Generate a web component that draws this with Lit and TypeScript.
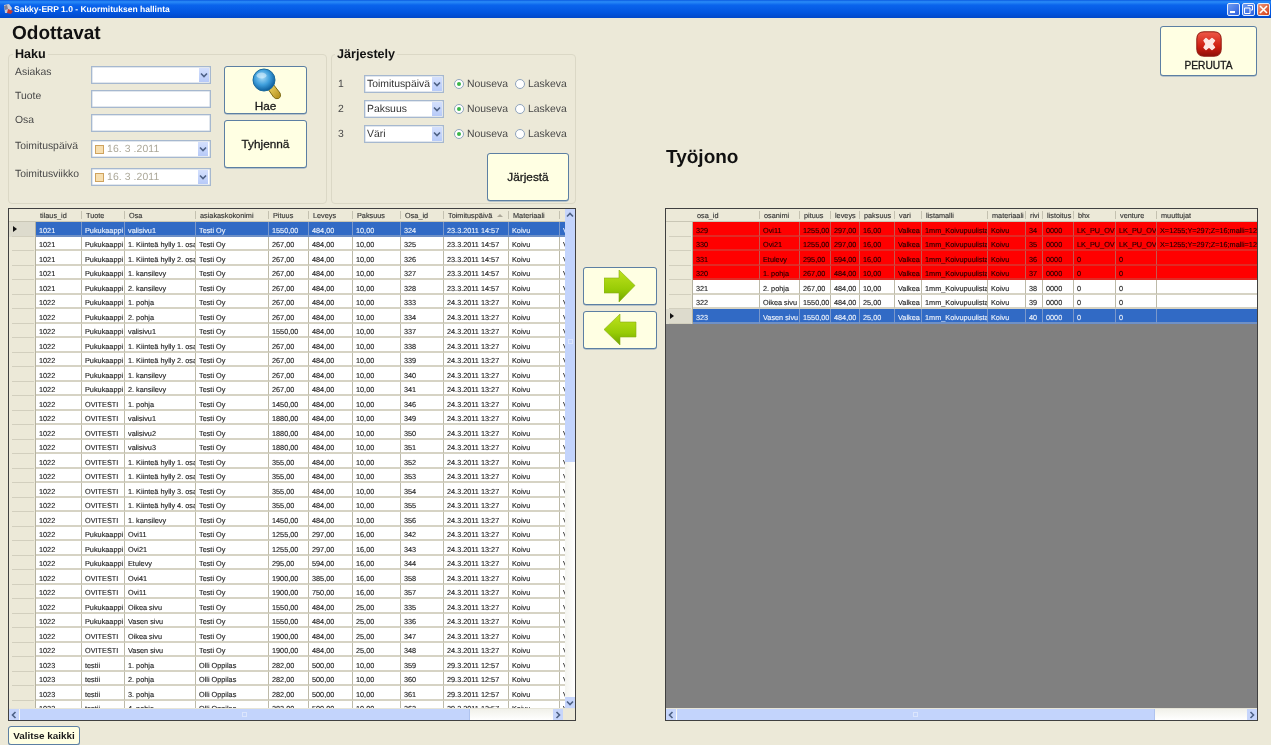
import { LitElement, html, css, svg } from 'lit';
import { customElement, property } from 'lit/decorators.js';

type Col = [string, number];

const LEFT_COLS: Col[] = [
  ['tilaus_id', 46], ['Tuote', 43], ['Osa', 71], ['asiakaskokonimi', 73], ['Pituus', 40],
  ['Leveys', 44], ['Paksuus', 48], ['Osa_id', 43], ['Toimituspäivä', 65], ['Materiaali', 51], ['', 60],
];

const RIGHT_COLS: Col[] = [
  ['osa_id', 67], ['osanimi', 40], ['pituus', 31], ['leveys', 29], ['paksuus', 35], ['vari', 27],
  ['listamalli', 66], ['materiaali', 38], ['rivi', 17], ['listoitus', 31], ['bhx', 42], ['venture', 41], ['muuttujat', 102],
];

const D1 = '23.3.2011 14:57';
const D2 = '24.3.2011 13:27';
const D3 = '29.3.2011 12:57';
const PK = 'Pukukaappi';
const OT = 'OVITESTI';

function left(id: string, tuote: string, osa: string, cust: string, p: string, l: string, t: string, osaId: string, d: string) {
  return [id, tuote, osa, cust, p, l, t, osaId, d, 'Koivu', 'Valkea'];
}

const LEFT_ROWS: string[][] = ([
  ['1021', PK, 'valisivu1', '1550,00', '484,00', '10,00', '324', D1],
  ['1021', PK, '1. Kiinteä hylly 1. osa', '267,00', '484,00', '10,00', '325', D1],
  ['1021', PK, '1. Kiinteä hylly 2. osa', '267,00', '484,00', '10,00', '326', D1],
  ['1021', PK, '1. kansilevy', '267,00', '484,00', '10,00', '327', D1],
  ['1021', PK, '2. kansilevy', '267,00', '484,00', '10,00', '328', D1],
  ['1022', PK, '1. pohja', '267,00', '484,00', '10,00', '333', D2],
  ['1022', PK, '2. pohja', '267,00', '484,00', '10,00', '334', D2],
  ['1022', PK, 'valisivu1', '1550,00', '484,00', '10,00', '337', D2],
  ['1022', PK, '1. Kiinteä hylly 1. osa', '267,00', '484,00', '10,00', '338', D2],
  ['1022', PK, '1. Kiinteä hylly 2. osa', '267,00', '484,00', '10,00', '339', D2],
  ['1022', PK, '1. kansilevy', '267,00', '484,00', '10,00', '340', D2],
  ['1022', PK, '2. kansilevy', '267,00', '484,00', '10,00', '341', D2],
  ['1022', OT, '1. pohja', '1450,00', '484,00', '10,00', '346', D2],
  ['1022', OT, 'valisivu1', '1880,00', '484,00', '10,00', '349', D2],
  ['1022', OT, 'valisivu2', '1880,00', '484,00', '10,00', '350', D2],
  ['1022', OT, 'valisivu3', '1880,00', '484,00', '10,00', '351', D2],
  ['1022', OT, '1. Kiinteä hylly 1. osa', '355,00', '484,00', '10,00', '352', D2],
  ['1022', OT, '1. Kiinteä hylly 2. osa', '355,00', '484,00', '10,00', '353', D2],
  ['1022', OT, '1. Kiinteä hylly 3. osa', '355,00', '484,00', '10,00', '354', D2],
  ['1022', OT, '1. Kiinteä hylly 4. osa', '355,00', '484,00', '10,00', '355', D2],
  ['1022', OT, '1. kansilevy', '1450,00', '484,00', '10,00', '356', D2],
  ['1022', PK, 'Ovi11', '1255,00', '297,00', '16,00', '342', D2],
  ['1022', PK, 'Ovi21', '1255,00', '297,00', '16,00', '343', D2],
  ['1022', PK, 'Etulevy', '295,00', '594,00', '16,00', '344', D2],
  ['1022', OT, 'Ovi41', '1900,00', '385,00', '16,00', '358', D2],
  ['1022', OT, 'Ovi11', '1900,00', '750,00', '16,00', '357', D2],
  ['1022', PK, 'Oikea sivu', '1550,00', '484,00', '25,00', '335', D2],
  ['1022', PK, 'Vasen sivu', '1550,00', '484,00', '25,00', '336', D2],
  ['1022', OT, 'Oikea sivu', '1900,00', '484,00', '25,00', '347', D2],
  ['1022', OT, 'Vasen sivu', '1900,00', '484,00', '25,00', '348', D2],
  ['1023', 'testii', '1. pohja', '282,00', '500,00', '10,00', '359', D3],
  ['1023', 'testii', '2. pohja', '282,00', '500,00', '10,00', '360', D3],
  ['1023', 'testii', '3. pohja', '282,00', '500,00', '10,00', '361', D3],
  ['1023', 'testii', '4. pohja', '282,00', '500,00', '10,00', '362', D3],
] as string[][]).map((r) => {
  const cust = r[0] === '1023' ? 'Olli Oppilas' : 'Testi Oy';
  return left(r[0], r[1], r[2], cust, r[3], r[4], r[5], r[6], r[7]);
});

const VARS = 'X=1255;Y=297;Z=16;malli=12;V=1';

function right(id: string, name: string, p: string, l: string, t: string, rivi: string, bhx = '0', vars = '') {
  return [id, name, p, l, t, 'Valkea', '1mm_Koivupuulista', 'Koivu', rivi, '0000', bhx, bhx, vars];
}

const RIGHT_ROWS: string[][] = [
  right('329', 'Ovi11', '1255,00', '297,00', '16,00', '34', 'LK_PU_OV', VARS),
  right('330', 'Ovi21', '1255,00', '297,00', '16,00', '35', 'LK_PU_OV', VARS),
  right('331', 'Etulevy', '295,00', '594,00', '16,00', '36'),
  right('320', '1. pohja', '267,00', '484,00', '10,00', '37'),
  right('321', '2. pohja', '267,00', '484,00', '10,00', '38'),
  right('322', 'Oikea sivu', '1550,00', '484,00', '25,00', '39'),
  right('323', 'Vasen sivu', '1550,00', '484,00', '25,00', '40'),
];

const chevron = (d: 'up' | 'down' | 'left' | 'right') => {
  const points = {
    up: '1,5.5 4,2.5 7,5.5',
    down: '1,2.5 4,5.5 7,2.5',
    left: '5.5,1 2.5,4 5.5,7',
    right: '2.5,1 5.5,4 2.5,7',
  }[d];
  return html`<svg class="chev" viewBox="0 0 8 8" width="8" height="8">
    <polyline points=${points} fill="none" stroke="#4d6185" stroke-width="1.6"></polyline>
  </svg>`;
};

@customElement('data-grid')
export class DataGrid extends LitElement {
  @property({ type: Array }) cols: Col[] = [];
  @property({ type: Array }) rows: string[][] = [];
  @property({ type: Number }) selected = 0;
  @property({ type: Number }) redRows = 0;
  @property({ type: Number }) hThumb = 100;
  @property({ type: Boolean }) vbar = false;
  @property() sorted = '';

  static styles = css`
    :host {
      display: flex;
      flex-direction: column;
      box-sizing: border-box;
      height: 513px;
      border: 1px solid #404040;
      background: #808080;
      font: 7.3px "Liberation Sans", Arial, sans-serif;
      color: #1c1c1c;
      -webkit-text-stroke: .12px;
    }
    .main { flex: 1; min-height: 0; display: flex; }
    .table { flex: 1; min-width: 0; overflow: hidden; }
    .row { display: grid; height: 14.5px; box-sizing: border-box; width: max-content; }
    .head {
      height: 13px;
      background: #ece9d8;
      border-bottom: 1px solid #c9c6b5;
      color: #333;
    }
    .hc {
      position: relative;
      padding: 2px 0 0 4px;
      overflow: hidden;
      white-space: nowrap;
      background: linear-gradient(#c4c1b0, #c4c1b0) 100% 2px / 1px 8px no-repeat;
    }
    .sort {
      position: absolute;
      right: 6px;
      top: 5px;
      border: 3px solid transparent;
      border-top: 0;
      border-bottom: 3px solid #aca899;
    }
    .rh {
      background: #ece9d8 linear-gradient(#d2cfbe, #d2cfbe) 3px 100% / 22px 1px no-repeat;
      border-right: 1px solid #b5b2a1;
      display: flex;
      align-items: center;
      padding-left: 4px;
      box-sizing: border-box;
    }
    .head .rh { background: #ece9d8; border-right: 0; }
    .mark {
      border: 3px solid transparent;
      border-left: 4px solid #111;
      border-right: 0;
    }
    .c {
      background: #fff;
      padding: 3.5px 0 0 3px;
      overflow: hidden;
      white-space: nowrap;
      box-sizing: border-box;
      border-right: 1px solid #bdbaa9;
      border-bottom: 2px solid #d6d3c4;
    }
    .red .c {
      background: #ff0000;
      color: #200000;
      border-right-color: #c4574f;
      border-bottom-color: #e02a24;
    }
    .sel .c {
      background: #316ac5;
      color: #eef3fb;
      border-right-color: #7a98cb;
      border-bottom-color: #6f90c6;
    }
    .sel .rh { background-color: #dddbcd; }
    .vbar {
      width: 10px;
      flex: none;
      display: flex;
      flex-direction: column;
      background: linear-gradient(90deg, #f4f4ef, #fff);
    }
    .hbar {
      height: 11px;
      flex: none;
      display: flex;
      background: linear-gradient(#f1f1ea, #fff);
      border-top: 1px solid #e7e5d8;
    }
    .btn {
      flex: none;
      width: 10px;
      height: 11px;
      background: #c6d5fb;
      display: flex;
      align-items: center;
      justify-content: center;
    }
    .hbar .btn:first-child { margin-right: 1px; }
    .spacer { flex: 1; }
    .thumb {
      background: #c3d4fc;
      border-right: 1px solid #afc3ef;
      display: flex;
      align-items: center;
      justify-content: center;
      box-sizing: border-box;
    }
    .grip { width: 5px; height: 5px; border: 1px solid #dbe5fd; box-sizing: border-box; }
    .vbar .thumb { height: 242px; border-right: 0; }
    .corner { flex: none; width: 12px; background: #ece9d8; }
    .chev { display: block; }
  `;

  private template() {
    return `27px ${this.cols.map((c) => `${c[1]}px`).join(' ')}`;
  }

  render() {
    const tpl = this.template();
    return html`
      <div class="main">
        <div class="table">
          <div class="row head" style="grid-template-columns:${tpl}">
            <div class="rh"></div>
            ${this.cols.map((c) => html`<div class="hc">${c[0]}${c[0] === this.sorted ? html`<span class="sort"></span>` : ''}</div>`)}
          </div>
          ${this.rows.map((r, i) => html`
            <div class="row ${i === this.selected ? 'sel' : ''} ${i < this.redRows ? 'red' : ''}" style="grid-template-columns:${tpl}">
              <div class="rh">${i === this.selected ? html`<span class="mark"></span>` : ''}</div>
              ${r.map((v) => html`<div class="c">${v}</div>`)}
            </div>
          `)}
        </div>
        ${this.vbar ? html`
          <div class="vbar">
            <div class="btn">${chevron('up')}</div>
            <div class="thumb"><span class="grip"></span></div>
            <div class="spacer"></div>
            <div class="btn">${chevron('down')}</div>
          </div>` : ''}
      </div>
      <div class="hbar">
        <div class="btn">${chevron('left')}</div>
        <div class="thumb" style="width:${this.hThumb}px"><span class="grip"></span></div>
        <div class="spacer"></div>
        <div class="btn">${chevron('right')}</div>
        ${this.vbar ? html`<div class="corner"></div>` : ''}
      </div>
    `;
  }
}

const magnifier = svg`
  <defs>
    <radialGradient id="lens" cx="42%" cy="38%" r="62%">
      <stop offset="0" stop-color="#a8dcf8"></stop>
      <stop offset="0.55" stop-color="#3f9fdc"></stop>
      <stop offset="1" stop-color="#0d5f9e"></stop>
    </radialGradient>
    <linearGradient id="handle" x1="0" y1="0" x2="1" y2="1">
      <stop offset="0" stop-color="#f5de70"></stop>
      <stop offset="1" stop-color="#b08a14"></stop>
    </linearGradient>
  </defs>
  <path d="M16 21 L21 16 L28 25 Q29.5 29 26.5 30.5 Q23.5 31.5 21.5 29 Z" fill="url(#handle)" stroke="#7d6a14" stroke-width="1"></path>
  <circle cx="12" cy="12" r="11" fill="url(#lens)" stroke="#1a6a9c" stroke-width="1"></circle>
  <ellipse cx="9.5" cy="7.5" rx="5" ry="3" fill="#dff3fd" opacity=".55"></ellipse>
`;

const cancelIcon = svg`
  <defs>
    <linearGradient id="cancel" x1="0" y1="0" x2="0" y2="1">
      <stop offset="0" stop-color="#ee5a48"></stop>
      <stop offset="0.6" stop-color="#cf1f12"></stop>
      <stop offset="1" stop-color="#8e1008"></stop>
    </linearGradient>
  </defs>
  <path d="M8 .8 H18 Q25.2 .8 25.2 8 V18 Q25.2 25.2 18 25.2 H8 Q.8 25.2 .8 18 V8 Q.8 .8 8 .8 Z" fill="url(#cancel)" stroke="#8f1a10" stroke-width="1"></path>
  <path d="M8 9.5 L10 7.5 L13 10 L16 7.5 L18.5 9.5 L16 13 L18.5 16.5 L16 18.5 L13 16 L10 18.5 L8 16.5 L10 13 Z" fill="#fde9e4" stroke="#fde9e4" stroke-width="1.4" stroke-linejoin="round"></path>
`;

const arrowGradient = (id: string) => svg`
  <defs>
    <linearGradient id=${id} x1="0" y1="0" x2="0" y2="1">
      <stop offset="0" stop-color="#bfe21e"></stop>
      <stop offset="0.6" stop-color="#98cc06"></stop>
      <stop offset="1" stop-color="#6fa300"></stop>
    </linearGradient>
  </defs>`;

const arrowRight = svg`
  ${arrowGradient('ar')}
  <path d="M0 8 H15 V0 L31 15.5 L15 32 V23 H0 Z" fill="url(#ar)" stroke="#86ad16" stroke-width=".6"></path>
`;

const arrowLeft = svg`
  ${arrowGradient('al')}
  <path d="M32 8 H16 V0 L0 15.5 L16 31 V23 H32 Z" fill="url(#al)" stroke="#86ad16" stroke-width=".6"></path>
`;

const appIcon = svg`
  <path d="M2 2 L7 1 L10 5 L8 10 L3 10 Z" fill="#c9c9d6"></path>
  <path d="M6 6 L11 8 L9 11 L5 10 Z" fill="#c33a35"></path>
  <path d="M2 3 L5 2 L6 6 L3 7 Z" fill="#7d7f95"></path>
`;

const CHECK_DATE = '16. 3 .2011';

@customElement('app-root')
export class AppRoot extends LitElement {
  static styles = css`
    :host {
      display: block;
      width: 1271px;
      height: 745px;
      overflow: hidden;
      background: #ece9d8;
      font-family: "Liberation Sans", Arial, sans-serif;
      color: #484848;
      text-rendering: geometricPrecision;
      filter: blur(.3px);
    }
    .titlebar {
      height: 18px;
      display: flex;
      align-items: center;
      background: linear-gradient(#0a5ae0 0, #2a8cf8 10%, #0a64ec 28%, #0256e0 70%, #0148c8 100%);
      color: #fff;
      font-size: 8.5px;
      font-weight: bold;
      padding-left: 2px;
    }
    .titlebar .name { flex: 1; }
    .winbtns { display: flex; gap: 2px; padding-right: 1px; }
    .winbtn {
      width: 13px;
      height: 13px;
      box-sizing: border-box;
      border: 1px solid #e4ecfc;
      border-radius: 2px;
      background: linear-gradient(135deg, #6f9cf0, #2c5ede);
      display: flex;
      align-items: center;
      justify-content: center;
    }
    .winbtn.close { background: linear-gradient(135deg, #ef9a7e, #d63c12); }
    .content {
      display: grid;
      grid-template-columns: 568px 89px 593px;
      padding-left: 8px;
    }
    h1 {
      margin: 0;
      font-size: 19px;
      line-height: 27px;
      height: 29px;
      padding-top: 2px;
      box-sizing: border-box;
      font-weight: bold;
      color: #111;
    }
    .title-l { padding-left: 4px; }
    .title-r { margin-top: 66px; padding-left: 1px; }
    .filters { display: flex; gap: 4px; margin-bottom: 4px; }
    fieldset {
      margin: 0;
      padding: 5px 0 0 6px;
      height: 157px;
      box-sizing: border-box;
      border: 1px solid #dbd8c6;
      border-radius: 4px;
      min-width: 0;
    }
    legend {
      margin-left: -2px;
      padding: 0 2px;
      font-size: 12.6px;
      line-height: 14px;
      font-weight: bold;
      color: #111;
    }
    .haku { width: 319px; display: flex; }
    .jarj { width: 245px; }
    .jarj legend { margin-left: -3px; }
    .form {
      display: grid;
      grid-template-columns: 76px 120px;
      grid-template-rows: 24px 24px 26px 28px 18px;
      margin-right: 13px;
    }
    .lbl { font-size: 10.4px; line-height: 14px; }
    .field {
      height: 18px;
      box-sizing: border-box;
      border: 1px solid #a6b8cf;
      box-shadow: inset 0 0 0 .5px #c3cfdd;
      background: #fff;
      display: flex;
      align-items: center;
      font-size: 10.4px;
      color: #333;
      padding-left: 2px;
      overflow: hidden;
      white-space: nowrap;
    }
    .field .val { flex: 1; min-width: 0; overflow: hidden; }
    .dd {
      flex: none;
      width: 10px;
      height: 14px;
      margin-right: 1px;
      background: linear-gradient(#d4e0fd, #b7caf8);
      display: flex;
      align-items: center;
      justify-content: center;
    }
    .date { color: #aca899; letter-spacing: .1px; padding-left: 3px; }
    .date .dd { margin-right: 2px; }
    .chk {
      flex: none;
      width: 9px;
      height: 9px;
      box-sizing: border-box;
      margin-right: 3px;
      border: 1px solid #cfa35e;
      background: #f7dfb0;
    }
    .chev { display: block; }
    .actions { display: flex; flex-direction: column; gap: 6px; }
    .ybtn {
      appearance: none;
      box-sizing: border-box;
      margin: 0;
      padding: 0;
      background: #ffffe3;
      border: 1px solid #5c7fa3;
      border-radius: 3px;
      box-shadow: 0 .5px 0 #7f9bb8;
      font: 11.8px "Liberation Sans", Arial, sans-serif;
      -webkit-text-stroke: .3px #1a1a1a;
      color: #1a1a1a;
      display: flex;
      flex-direction: column;
      align-items: center;
      justify-content: center;
    }
    .big { width: 83px; height: 48px; }
    .hae { justify-content: flex-start; }
    .hae svg { margin-top: 1px; margin-left: 2px; }
    .hae span { line-height: 13px; }
    .sortrows {
      display: grid;
      grid-template-columns: 26px 80px auto;
      grid-auto-rows: 18px;
      row-gap: 7px;
      align-items: center;
      margin-top: 9px;
      font-size: 10.4px;
    }
    .radios { display: flex; align-items: center; margin-left: 10px; }
    .radio {
      width: 10px;
      height: 10px;
      flex: none;
      box-sizing: border-box;
      border: 1px solid #8fa4bd;
      border-radius: 50%;
      background: #fff;
      display: flex;
      align-items: center;
      justify-content: center;
      margin-right: 3px;
    }
    .radio.on::after {
      content: "";
      width: 4px;
      height: 4px;
      border-radius: 50%;
      background: #3cb64a;
    }
    .rl { width: 41px; margin-right: 7px; white-space: nowrap; }
    .jarjesta { width: 82px; height: 48px; margin: 10px 0 0 149px; }
    .bottom {
      display: block;
      margin-top: 5px;
      width: 72px;
      height: 19px;
      font: bold 9.9px "Liberation Sans", Arial, sans-serif;
      -webkit-text-stroke: 0;
    }
    .middle { padding: 249px 0 0 7px; display: flex; flex-direction: column; gap: 6px; }
    .arrow { width: 74px; height: 38px; }
    .right { display: flex; flex-direction: column; }
    .peruuta {
      align-self: flex-end;
      width: 97px;
      height: 50px;
      margin: 8px 1px 0 0;
      justify-content: flex-start;
      font-size: 10.2px;
    }
    .peruuta svg { margin-top: 4px; }
    .peruuta span { line-height: 12px; margin-top: 3px; }
    .right data-grid { margin-top: 37px; }
  `;

  private dropdown(value: string) {
    return html`<div class="field"><span class="val">${value}</span><span class="dd">${chevron('down')}</span></div>`;
  }

  private datePicker() {
    return html`<div class="field date"><span class="chk"></span><span class="val">${CHECK_DATE}</span><span class="dd">${chevron('down')}</span></div>`;
  }

  private sortRow(n: number, value: string) {
    return html`
      <span>${n}</span>
      ${this.dropdown(value)}
      <div class="radios">
        <span class="radio on"></span><span class="rl">Nouseva</span>
        <span class="radio"></span><span class="rl">Laskeva</span>
      </div>
    `;
  }

  render() {
    return html`
      <div class="titlebar">
        <svg width="12" height="12" viewBox="0 0 12 12">${appIcon}</svg>
        <span class="name">Sakky-ERP 1.0 - Kuormituksen hallinta</span>
        <div class="winbtns">
          <div class="winbtn"><svg width="9" height="9" viewBox="0 0 9 9"><rect x="1" y="6" width="5" height="2" fill="#fff"></rect></svg></div>
          <div class="winbtn"><svg width="9" height="9" viewBox="0 0 9 9"><path d="M3.5 .5 H8.5 V5 H7 M.5 3 H6 V8.5 H.5 Z" fill="none" stroke="#fff"></path></svg></div>
          <div class="winbtn close"><svg width="9" height="9" viewBox="0 0 9 9"><path d="M1 1 L8 8 M8 1 L1 8" stroke="#fff" stroke-width="1.6"></path></svg></div>
        </div>
      </div>
      <div class="content">
        <div class="left">
          <h1 class="title-l">Odottavat</h1>
          <div class="filters">
            <fieldset class="haku">
              <legend>Haku</legend>
              <div class="form">
                <span class="lbl">Asiakas</span>${this.dropdown('')}
                <span class="lbl">Tuote</span><div class="field"></div>
                <span class="lbl">Osa</span><div class="field"></div>
                <span class="lbl">Toimituspäivä</span>${this.datePicker()}
                <span class="lbl">Toimitusviikko</span>${this.datePicker()}
              </div>
              <div class="actions">
                <button class="ybtn big hae">
                  <svg width="30" height="32" viewBox="0 0 30 32">${magnifier}</svg>
                  <span>Hae</span>
                </button>
                <button class="ybtn big">Tyhjennä</button>
              </div>
            </fieldset>
            <fieldset class="jarj">
              <legend>Järjestely</legend>
              <div class="sortrows">
                ${this.sortRow(1, 'Toimituspäivä')}
                ${this.sortRow(2, 'Paksuus')}
                ${this.sortRow(3, 'Väri')}
              </div>
              <button class="ybtn jarjesta">Järjestä</button>
            </fieldset>
          </div>
          <data-grid .cols=${LEFT_COLS} .rows=${LEFT_ROWS} .hThumb=${450} sorted="Toimituspäivä" vbar></data-grid>
          <button class="ybtn bottom">Valitse kaikki</button>
        </div>
        <div class="middle">
          <button class="ybtn arrow"><svg width="32" height="33" viewBox="0 0 32 33">${arrowRight}</svg></button>
          <button class="ybtn arrow"><svg width="33" height="32" viewBox="0 0 33 32">${arrowLeft}</svg></button>
        </div>
        <div class="right">
          <button class="ybtn peruuta">
            <svg width="26" height="26" viewBox="0 0 26 26">${cancelIcon}</svg>
            <span>PERUUTA</span>
          </button>
          <h1 class="title-r">Työjono</h1>
          <data-grid .cols=${RIGHT_COLS} .rows=${RIGHT_ROWS} .selected=${6} .redRows=${4} .hThumb=${478}></data-grid>
        </div>
      </div>
    `;
  }
}
